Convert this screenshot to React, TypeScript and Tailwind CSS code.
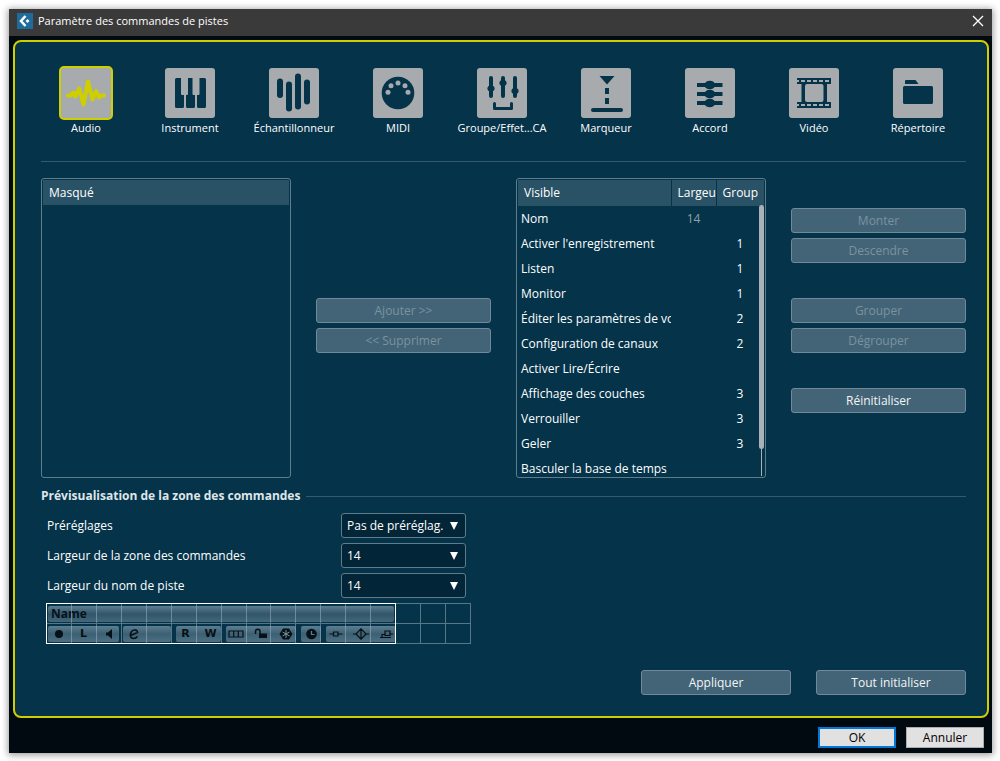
import React from "react";

const FG = "#04334a";

function Tile({ children }: { children: React.ReactNode }) {
  return (
    <svg viewBox="0 0 50 50" className="block size-[50px]" aria-hidden="true">
      {children}
    </svg>
  );
}

const tabs: { label: string; icon: React.ReactNode }[] = [
  {
    label: "Audio",
    icon: (
      <path
        d="M7 27.500H9.500L12.500 24.500L14.500 28.500L18.200 20.500L22.500 36.500L27 13.500L31.500 31.500L35 23L38 29.500L40.500 27.500H43"
        fill="none"
        stroke="#cfcf00"
        strokeWidth="4"
        strokeLinecap="round"
        strokeLinejoin="round"
      />
    ),
  },
  {
    label: "Instrument",
    icon: (
      <path
        fill={FG}
        d="M11.500 10H16V26a1 1 0 0 0 1 1h2V38.500a1.500 1.500 0 0 1-1.500 1.500H11.500a1.500 1.500 0 0 1-1.500-1.500V11.500a1.500 1.500 0 0 1 1.500-1.500ZM23 10H27.500V26a1 1 0 0 0 1 1H30V38.500a1.500 1.500 0 0 1-1.500 1.500H22.500a1.500 1.500 0 0 1-1.500-1.500V27h1a1 1 0 0 0 1-1ZM34.500 10H39.500a1.500 1.500 0 0 1 1.500 1.500V38.500a1.500 1.500 0 0 1-1.500 1.500H33.500a1.500 1.500 0 0 1-1.500-1.500V27h1.500a1 1 0 0 0 1-1Z"
      />
    ),
  },
  {
    label: "Échantillonneur",
    icon: (
      <path d="M11 13.500V27M20 16.500V40.500M29 8.500V38.500M38 14.500V33.500" stroke={FG} strokeWidth="6" strokeLinecap="round" />
    ),
  },
  {
    label: "MIDI",
    icon: (
      <>
        <circle cx="25" cy="25" r="16.3" fill={FG} />
        <g fill="#a8abae">
          <circle cx="15" cy="24.300" r="2.500" />
          <circle cx="18" cy="17.700" r="2.500" />
          <circle cx="25" cy="15" r="2.500" />
          <circle cx="32" cy="17.700" r="2.500" />
          <circle cx="35" cy="24.300" r="2.500" />
        </g>
      </>
    ),
  },
  {
    label: "Groupe/Effet...CA",
    icon: (
      <>
        <path d="M14 10V28M26 10V28M38 10V28" stroke={FG} strokeWidth="4" strokeLinecap="round" />
        <g fill={FG}>
          <ellipse cx="14" cy="20.500" rx="3.600" ry="3" />
          <ellipse cx="26" cy="15" rx="3.600" ry="3" />
          <ellipse cx="38" cy="23" rx="3.600" ry="3" />
        </g>
        <path d="M17.500 35.500V40.500H34.500V35.500" fill="none" stroke={FG} strokeWidth="3" strokeLinecap="round" strokeLinejoin="round" />
      </>
    ),
  },
  {
    label: "Marqueur",
    icon: (
      <>
        <path fill={FG} d="M18.500 8H33.500L26 16.500ZM24 20h4v6h-4ZM24 30h4v6h-4Z" />
        <path d="M12 42H40" stroke={FG} strokeWidth="4" strokeLinecap="round" />
      </>
    ),
  },
  {
    label: "Accord",
    icon: (
      <>
        <path d="M12 17H37.500M12 26H37.500M12 35H37.500" stroke={FG} strokeWidth="4" />
        <g fill={FG}>
          <ellipse cx="24.800" cy="17" rx="5.500" ry="4.300" />
          <ellipse cx="24.800" cy="26" rx="5.500" ry="4.300" />
          <ellipse cx="24.800" cy="35" rx="5.500" ry="4.300" />
        </g>
      </>
    ),
  },
  {
    label: "Vidéo",
    icon: (
      <>
        <path fill={FG} fillRule="evenodd" d="M8 10H42V16H38V34H42V40H8V34H12.500V16H8ZM18 16a2 2 0 0 0-2 2V32a2 2 0 0 0 2 2H32.500a2 2 0 0 0 2-2V18a2 2 0 0 0-2-2Z" />
        <path d="M8 13H42M8 37H42" stroke="#a8abae" strokeWidth="2" strokeDasharray="4 2" strokeDashoffset="2" />
      </>
    ),
  },
  {
    label: "Répertoire",
    icon: (
      <path
        fill={FG}
        d="M12 13a1 1 0 0 1 1-1H22.500L25.500 16H12ZM11.500 18H38.500a1.500 1.500 0 0 1 1.500 1.500V34.500a1.500 1.500 0 0 1-1.500 1.500H11.500a1.500 1.500 0 0 1-1.500-1.500V19.500a1.500 1.500 0 0 1 1.500-1.500Z"
      />
    ),
  },
];

const rows: [string, string, string][] = [
  ["Nom", "14", ""],
  ["Activer l'enregistrement", "", "1"],
  ["Listen", "", "1"],
  ["Monitor", "", "1"],
  ["Éditer les paramètres de vo", "", "2"],
  ["Configuration de canaux", "", "2"],
  ["Activer Lire/Écrire", "", ""],
  ["Affichage des couches", "", "3"],
  ["Verrouiller", "", "3"],
  ["Geler", "", "3"],
  ["Basculer la base de temps", "", ""],
];

function PanelButton({ children, disabled = false, className = "" }: { children: string; disabled?: boolean; className?: string }) {
  return (
    <button
      type="button"
      disabled={disabled}
      className={`flex h-[25px] items-center justify-center rounded-[3px] border border-[#71899a] bg-[#436477] text-xs leading-4 text-[#f2f5f6] disabled:text-[#7b929f] ${className}`}
    >
      {children}
    </button>
  );
}

function Field({ id, label, value }: { id: string; label: string; value: string }) {
  return (
    <div className="flex h-[25px] items-center">
      <label htmlFor={id} className="w-[294px] text-xs leading-4">
        {label}
      </label>
      <div className="relative h-full w-[125px]">
        <select
          id={id}
          className="block h-full w-full appearance-none rounded-[3px] border border-[#5f7c8b] bg-[#022537] pl-[5px] pr-4 text-xs leading-4 text-white"
        >
          <option>{value}</option>
        </select>
        <svg viewBox="0 0 8 8" className="pointer-events-none absolute top-[9px] right-2 size-2" aria-hidden="true">
          <path d="M0 0H8L4 8Z" fill="#fff" />
        </svg>
      </div>
    </div>
  );
}

function Glyph({ children }: { children: React.ReactNode }) {
  return (
    <svg viewBox="0 0 18 12" className="h-3 w-[18px]" fill="none" stroke="#071016" strokeWidth="1.2" aria-hidden="true">
      {children}
    </svg>
  );
}

const letter = "font-['DejaVu_Sans',sans-serif] text-[11px] leading-3 font-bold text-[#071016]";

const groups: { pad: string; cell: string; cells: React.ReactNode[] }[] = [
  {
    pad: "left-[2px] right-[2px]",
    cell: "",
    cells: [
      <Glyph><circle cx="9" cy="6" r="4" fill="#071016" stroke="none" /></Glyph>,
      <span className={letter}>L</span>,
      <Glyph><path d="M6 4.500H8L12 1V11L8 7.500H6Z" fill="#071016" stroke="none" /></Glyph>,
    ],
  },
  {
    pad: "left-[2px] right-0",
    cell: "",
    cells: [
      <Glyph><path d="M5.500 7.500L12.500 4.500C12.500 1.500 8.500 1 6.500 3.500C4.500 6.500 5 10.500 8.500 10.500C10 10.500 11.500 9.800 12.500 8.500" strokeWidth="1.500" /></Glyph>,
      null,
    ],
  },
  { pad: "left-[5px] right-0", cell: "pl-1", cells: [<span className={letter}>R</span>, <span className={letter}>W</span>] },
  {
    pad: "left-[5px] right-0",
    cell: "pl-1",
    cells: [
      <Glyph><path d="M2 3H16V9H2ZM6.700 3V9M11.300 3V9" /></Glyph>,
      <Glyph>
        <path d="M3.500 6V3.500a2 2 0 0 1 4.500 0V6" strokeWidth="1.500" />
        <path d="M7 5.500H15V10H7Z" fill="#071016" stroke="none" />
      </Glyph>,
      <Glyph>
        <path d="M6 .5H12L15.500 6L12 11.500H6L2.500 6Z" fill="#071016" stroke="none" />
        <path d="M9 2V10M5.500 4L12.500 8M12.500 4L5.500 8" stroke="#7895a2" strokeWidth="1" />
      </Glyph>,
    ],
  },
  {
    pad: "left-[5px] right-0",
    cell: "pl-1",
    cells: [
      <Glyph>
        <circle cx="9.500" cy="6" r="5.300" fill="#071016" stroke="none" />
        <path d="M9.500 3V6.500H12.500" stroke="#5f7f8f" />
      </Glyph>,
    ],
  },
  {
    pad: "left-[5px] right-0",
    cell: "pl-1",
    cells: [
      <Glyph><path d="M2.500 6H6.500M11 6H15.500M6.500 4H11V8H6.500Z" /></Glyph>,
      <Glyph><path d="M1 6H4L9 .8L14 6H17M4 6L9 11.200L14 6M9 .8V11.200" /></Glyph>,
      <Glyph><path d="M3 9.500H14M5 9.500V6.500H8M8 3H13V7.500H8ZM13 6H16" /></Glyph>,
    ],
  },
];

function Preview() {
  return (
    <div className="relative h-[41px] w-[425px]">
      <div className="flex h-5 w-[350px] pt-[3px] pr-[2px] pl-[2px]">
        <div className="h-4 w-full rounded-[2px] bg-linear-to-b from-[#5d7e8f] via-[#31566a] to-[#44677a] pl-[3px] text-xs leading-4 font-bold text-[#06121a]">
          Name
        </div>
      </div>
      <div className="flex h-[21px] pt-[2px]">
        {groups.map((g, i) => (
          <div key={i} className="relative flex">
            <div className={`absolute top-[1px] h-4 rounded-[2px] bg-linear-to-b from-[#5d7e8f] via-[#3b6074] to-[#4d7083] ${g.pad}`} />
            {g.cells.map((c, j) => (
              <div key={j} className={`relative flex h-[18px] w-[25px] items-center justify-center ${g.cell}`}>
                {c}
              </div>
            ))}
          </div>
        ))}
      </div>
      <div className="absolute inset-0 grid grid-cols-17 grid-rows-2 border-t border-l border-[#9fb4bf88]">
        {Array.from({ length: 34 }, (_, i) => (
          <div key={i} className="border-r border-b border-[#9fb4bf88]" />
        ))}
      </div>
      <div className="absolute inset-y-0 left-0 w-[350px] border border-white" />
    </div>
  );
}

export default function App() {
  return (
    <div className="bg-white pt-[9px] pr-2 pb-2 pl-[9px] font-['Open_Sans','Noto_Sans',sans-serif] text-white">
      <div className="bg-[#010a10] shadow-[0_1px_7px_1px_rgba(0,0,0,0.4)]">
        <header className="flex h-[27px] items-center bg-[#3a3a3a] pr-2 pl-2">
          <svg viewBox="0 0 16 16" className="mb-1 size-4" aria-hidden="true">
            <rect width="16" height="16" fill="#1f6b9c" />
            <path d="M8.500 3L4 8L8.500 13" fill="none" stroke="#fff" strokeWidth="2.600" />
            <path d="M10.500 6L12.500 8L10.500 10L8.500 8Z" fill="#fff" />
          </svg>
          <h1 className="mb-1 ml-[5px] flex-1 text-[11px] leading-4">Paramètre des commandes de pistes</h1>
          <button type="button" aria-label="Fermer" className="mb-1 size-3">
            <svg viewBox="0 0 12 12" className="size-3" aria-hidden="true">
              <path d="M1 1L11 11M11 1L1 11" stroke="#fff" strokeWidth="1.300" />
            </svg>
          </button>
        </header>

        <div className="pt-1 pr-[3px] pl-1">
          <main className="rounded-lg border-2 border-[#cfcf00] bg-[#04334a] pb-[21px]">
            <nav className="grid grid-cols-9 pt-6 pr-[17px] pl-[19px]">
              {tabs.map((t, i) => (
                <button key={t.label} type="button" aria-pressed={i === 0} className="flex flex-col items-center text-[11px] leading-4">
                  <span className={`rounded-[5px] border-2 ${i === 0 ? "border-[#cfcf00] bg-[#a8abae]" : "border-transparent bg-[#a8abae] bg-clip-padding"}`}>
                    <Tile>{t.icon}</Tile>
                  </span>
                  <span className="whitespace-nowrap">{t.label}</span>
                </button>
              ))}
            </nav>

            <div className="pr-[21px] pl-[26px]">
              <hr className="mt-[25px] border-[#36596b]" />
              <div className="mt-4 grid grid-cols-[250fr_175fr_250fr_175fr] gap-[25px]">
                <section className="h-[300px] rounded-[3px] border border-[#5f7c8b] p-[1px]">
                  <h2 className="h-[25px] bg-[#2a5266] pl-1.5 text-xs leading-[25px]">Masqué</h2>
                </section>

                <div className="flex flex-col justify-center gap-[5px] pb-[5px]">
                  <PanelButton disabled>{"Ajouter >>"}</PanelButton>
                  <PanelButton disabled>{"<< Supprimer"}</PanelButton>
                </div>

                <section className="relative h-[300px] overflow-hidden rounded-[3px] border border-[#5f7c8b] p-[1px]">
                  <table className="w-full table-fixed border-collapse text-xs leading-[25px]">
                    <colgroup>
                      <col />
                      <col className="w-[45px]" />
                      <col className="w-[48px]" />
                    </colgroup>
                    <thead>
                      <tr className="h-[26px] bg-[#2a5266] text-left align-top">
                        <th className="p-0 pl-1.5 font-normal">Visible</th>
                        <th className="border-l border-[#04334a] p-0 pl-1.5 font-normal">
                          <span className="block overflow-hidden whitespace-nowrap">Largeu</span>
                        </th>
                        <th className="border-l border-[#04334a] p-0 pl-1.5 font-normal">Group</th>
                      </tr>
                    </thead>
                    <tbody>
                      {rows.map(([name, width, group]) => (
                        <tr key={name} className="h-[25px]">
                          <td className="overflow-hidden p-0 pl-[3px] whitespace-nowrap">{name}</td>
                          <td className="p-0 text-center text-[#93a0a5]">{width}</td>
                          <td className="p-0 text-center">{group}</td>
                        </tr>
                      ))}
                    </tbody>
                  </table>
                  <div className="absolute top-[26px] right-[1px] bottom-[1px] flex w-[5px] flex-col items-center">
                    <div className="h-[244px] w-[5px] rounded-full bg-[#a9b2b8]" />
                    <div className="w-px flex-1 bg-[#a9b2b8]" />
                  </div>
                </section>

                <div className="flex flex-col pt-[30px]">
                  <PanelButton disabled>Monter</PanelButton>
                  <PanelButton disabled className="mt-[5px]">Descendre</PanelButton>
                  <PanelButton disabled className="mt-[35px]">Grouper</PanelButton>
                  <PanelButton disabled className="mt-[5px]">Dégrouper</PanelButton>
                  <PanelButton className="mt-[35px]">Réinitialiser</PanelButton>
                </div>
              </div>

              <div className="mt-[9px] flex items-center gap-1.5">
                <h2 className="text-xs leading-[18px] font-bold text-[#dfe5e8]">Prévisualisation de la zone des commandes</h2>
                <div className="h-px flex-1 bg-[#36596b]" />
              </div>
              <form className="mt-2 flex flex-col gap-[5px] pl-1.5">
                <Field id="preset" label="Préréglages" value="Pas de préréglag." />
                <Field id="area-width" label="Largeur de la zone des commandes" value="14" />
                <Field id="name-width" label="Largeur du nom de piste" value="14" />
              </form>
              <div className="mt-[5px] pl-[5px]">
                <Preview />
              </div>
              <div className="mt-[26px] flex justify-end gap-[25px]">
                <PanelButton className="w-[150px]">Appliquer</PanelButton>
                <PanelButton className="w-[150px]">Tout initialiser</PanelButton>
              </div>
            </div>
          </main>
        </div>

        <footer className="flex justify-end gap-2.5 pt-[9px] pr-2 pb-[5px] text-xs leading-4 text-black">
          <button type="button" className="h-[21px] w-[78px] border-2 border-[#0078d7] bg-[#e1e1e1]">OK</button>
          <button type="button" className="h-[21px] w-[78px] border border-[#adadad] bg-[#e1e1e1]">Annuler</button>
        </footer>
      </div>
    </div>
  );
}
